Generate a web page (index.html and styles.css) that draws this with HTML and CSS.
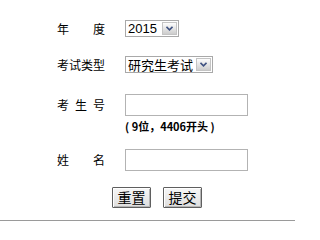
FILE: index.html
```html
<!DOCTYPE html>
<html lang="zh-CN">
<head>
<meta charset="utf-8">
<title>查询</title>
<link rel="stylesheet" href="styles.css">
</head>
<body>
<form class="form">
  <div class="row r1">
    <label class="lab"><span>年</span><span>度</span></label>
    <span class="sel">
      <select class="s-year"><option>2015</option></select>
      <span class="arrow"><svg width="7" height="5" viewBox="0 0 7 5"><path d="M0.5 0.8 L3.5 3.8 L6.5 0.8" fill="none" stroke="#3f5282" stroke-width="1.6"/></svg></span>
    </span>
  </div>
  <div class="row r2">
    <label class="lab"><span>考</span><span>试</span><span>类</span><span>型</span></label>
    <span class="sel">
      <select class="s-type"><option>研究生考试</option></select>
      <span class="arrow"><svg width="7" height="5" viewBox="0 0 7 5"><path d="M0.5 0.8 L3.5 3.8 L6.5 0.8" fill="none" stroke="#3f5282" stroke-width="1.6"/></svg></span>
    </span>
  </div>
  <div class="row r3">
    <label class="lab tall"><span>考</span><span>生</span><span>号</span></label>
    <div class="field">
      <input class="txt" type="text">
      <div class="hint">( 9位，4406开头 )</div>
    </div>
  </div>
  <div class="row r4">
    <label class="lab"><span>姓</span><span>名</span></label>
    <input class="txt" type="text">
  </div>
  <div class="btns">
    <button type="reset" class="btn">重置</button>
    <button type="submit" class="btn">提交</button>
  </div>
</form>
<div class="rule"></div>
</body>
</html>
```

FILE: styles.css
```css
html, body {
  margin: 0;
  padding: 0;
  background: #fff;
}
body {
  width: 295px;
  height: 221px;
  overflow: hidden;
  font-family: "Noto Sans CJK SC", "Liberation Sans", sans-serif;
  color: #000;
}
.form {
  margin: 0;
  padding: 20px 0 0 57px;
}
.row {
  display: flex;
  align-items: center;
  height: 17px;
}
.r2 { margin-top: 19px; }
.r3 { margin-top: 21px; align-items: flex-start; height: auto; }
.r4 { margin-top: 17px; height: 22px; }
.lab {
  width: 48px;
  margin-right: 20px;
  display: flex;
  justify-content: space-between;
  font-size: 12px;
  line-height: 14px;
}
.lab.tall { line-height: 22px; }
.sel {
  position: relative;
  display: inline-block;
  height: 17px;
}
.sel select {
  -webkit-appearance: none;
  appearance: none;
  box-sizing: border-box;
  height: 17px;
  margin: 0;
  padding: 0 0 0 2px;
  border: 1px solid #a9a9a9;
  border-radius: 0;
  background: #fff;
  color: #000;
  font-size: 13px;
  line-height: 15px;
  display: block;
}
.s-year {
  width: 54px;
  font-family: "Liberation Sans", Arial, sans-serif;
  font-size: 14px;
}
.s-type {
  width: 88px;
  font-family: "Noto Sans CJK SC", sans-serif;
}
.arrow {
  position: absolute;
  right: 2px;
  top: 2px;
  width: 13px;
  height: 11px;
  border: 1px solid #c4c4c4;
  background: linear-gradient(#fdfdfd, #cdcdcd);
  display: flex;
  align-items: center;
  justify-content: center;
  pointer-events: none;
}
.txt {
  box-sizing: border-box;
  width: 123px;
  height: 22px;
  margin: 0;
  border: 1px solid #b3b3b3;
  padding: 0 2px;
  background: #fff;
  font-size: 12px;
  display: block;
}
.hint {
  margin-top: 4px;
  font-size: 11px;
  line-height: 12px;
  height: 12px;
  font-weight: bold;
  white-space: nowrap;
}
.btns {
  display: flex;
  gap: 12px;
  margin: 16px 0 0 55px;
}
.btn {
  box-sizing: border-box;
  width: 39px;
  height: 21px;
  margin: 0;
  padding: 0;
  border: 1px solid #5f5f5f;
  border-radius: 1px;
  background: linear-gradient(#f7f7f7, #dedede);
  box-shadow: inset 1px 1px 0 #fff, inset -1px -1px 0 #b5b5b5;
  font-family: "Noto Sans CJK SC", sans-serif;
  font-size: 14px;
  line-height: 17px;
  color: #000;
}
.rule {
  margin-top: 12px;
  height: 0;
  border-top: 1px solid #9a9a9a;
  border-bottom: 1px solid #e2e2e2;
}
```
